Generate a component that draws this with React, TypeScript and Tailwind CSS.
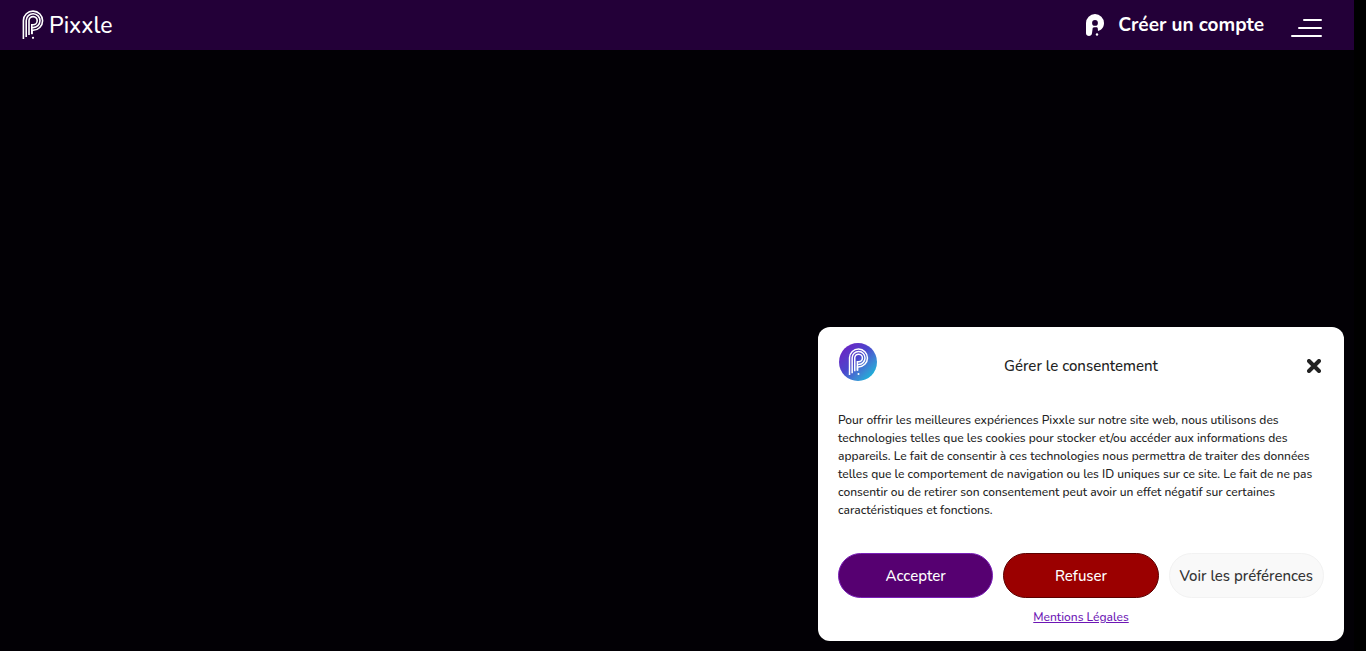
import { useState } from 'react';

interface LogoMarkProps {
  className: string;
}

// Three nested strokes forming the "P" of the brand
const LogoMark: React.FC<LogoMarkProps> = ({ className }) => (
  <svg viewBox="0 0 22 30" className={className} fill="none" aria-hidden="true">
    <g stroke="currentColor" strokeWidth="1.6">
      <path d="M1.4 29V10.5A9.6 9.6 0 1 1 11 20.3h-1v4" />
      <path d="M4.2 27V10.5A6.9 6.9 0 1 1 11 17.6H9.8" />
      <path d="M7 25V10.5A4.1 4.1 0 1 1 11 14.8H9.8V24" />
    </g>
    <circle cx="11" cy="27.8" r="1.1" fill="currentColor" />
  </svg>
);

const AccountIcon: React.FC = () => (
  <svg viewBox="0 0 18 23" className="h-[23px] w-[18px]" aria-hidden="true">
    <path
      fillRule="evenodd"
      fill="currentColor"
      d="M0 9a9 9 0 0 1 18 0c0 4.200-2.500 7.200-6 7.900l-.3-3c-.8-.8-4.200-.8-5 0L6 19.200c-.2 1.700-1.500 2.800-3 2.800S0 20.900 0 19.200ZM9 6a2.900 2.900 0 1 0 0 5.800A2.900 2.900 0 0 0 9 6Z"
    />
    <circle cx="11" cy="20.500" r="1.200" fill="currentColor" />
  </svg>
);

const Header: React.FC = () => (
  <header className="flex h-[50px] items-center justify-between bg-[#230038] pr-8 pl-[22px] text-white">
    <a href="#" className="flex items-center gap-[5px]">
      <LogoMark className="h-[30px] w-[22px]" />
      <span className="pt-0.5 text-[23px] font-medium">Pixxle</span>
    </a>
    <div className="flex items-center gap-[27px]">
      <a href="#" className="flex items-center gap-3.5 text-[19px] font-bold">
        <AccountIcon />
        Créer un compte
      </a>
      <button type="button" aria-label="Menu" className="mt-1.5 flex w-[31px] flex-col items-end gap-1.5">
        <span className="h-0.5 w-[19px] rounded-full bg-white" />
        <span className="h-0.5 w-6 rounded-full bg-white" />
        <span className="h-0.5 w-[31px] rounded-full bg-white" />
      </button>
    </div>
  </header>
);

interface ConsentBannerProps {
  onClose: () => void;
}

const ConsentBanner: React.FC<ConsentBannerProps> = ({ onClose }) => (
  <section
    aria-labelledby="consent-title"
    className="fixed right-[22px] bottom-2.5 w-full max-w-[526px] rounded-xl bg-white px-5 pt-4 pb-[15px] font-medium text-[#222222]"
  >
    <div className="grid grid-cols-[1fr_auto_1fr] items-center">
      <span className="mx-px mb-2 flex size-[38px] items-center justify-center rounded-full bg-linear-to-br from-[#6a1fc4] from-10% via-[#4a45cc] via-45% to-[#00b8d8] to-90% text-white">
        <LogoMark className="h-7 w-[21px]" />
      </span>
      <h2 id="consent-title" className="text-[15px]">
        Gérer le consentement
      </h2>
      <button type="button" onClick={onClose} aria-label="Fermer" className="mr-[3px] justify-self-end">
        <svg viewBox="0 0 14 14" className="size-3.5" stroke="currentColor" strokeWidth="4" strokeLinecap="round">
          <path d="M2 2l10 10M12 2L2 12" />
        </svg>
      </button>
    </div>
    <p className="mt-[22px] text-[12px] leading-[18px]">
      Pour offrir les meilleures expériences Pixxle sur notre site web, nous utilisons des technologies telles que les
      cookies pour stocker et/ou accéder aux informations des appareils. Le fait de consentir à ces technologies nous
      permettra de traiter des données telles que le comportement de navigation ou les ID uniques sur ce site. Le fait
      de ne pas consentir ou de retirer son consentement peut avoir un effet négatif sur certaines caractéristiques et
      fonctions.
    </p>
    <div className="mt-[34px] grid grid-cols-3 gap-2.5 text-[15px]">
      <button type="button" onClick={onClose} className="h-[45px] rounded-full border border-[#7a1fb8] bg-[#560071] pt-0.5 text-white">
        Accepter
      </button>
      <button type="button" onClick={onClose} className="h-[45px] rounded-full border border-[#5c0000] bg-[#9b0000] pt-0.5 text-white">
        Refuser
      </button>
      <button type="button" className="h-[45px] rounded-full border border-[#f2f2f2] bg-[#f9f9f9] pt-0.5 whitespace-nowrap text-[#333333]">
        Voir les préférences
      </button>
    </div>
    <div className="mt-2.5 text-center text-[12px] leading-[18px]">
      <a href="#" className="text-[#6d16b5] underline">
        Mentions Légales
      </a>
    </div>
  </section>
);

const App: React.FC = () => {
  const [showConsent, setShowConsent] = useState(true);

  return (
    <div className="min-h-screen bg-black pr-3 font-[Nunito,Lato,sans-serif]">
      <div className="min-h-screen bg-[#020005]">
        <Header />
      </div>
      {showConsent && <ConsentBanner onClose={() => setShowConsent(false)} />}
    </div>
  );
};

export default App;
